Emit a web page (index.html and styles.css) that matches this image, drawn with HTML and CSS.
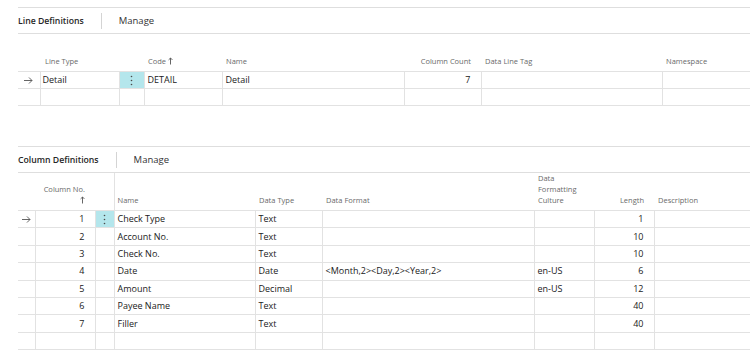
FILE: index.html
```html
<!DOCTYPE html>
<html lang="en">
<head>
    <meta charset="UTF-8">
    <title>Data Exchange Definition</title>
    <link rel="stylesheet" href="styles.css">
</head>
<body>
    <section class="part">
        <div class="toolbar">
            <span class="part-title">Line Definitions</span>
            <span class="sep"></span>
            <span class="action">Manage</span>
        </div>

        <table class="grid lines">
            <colgroup>
                <col style="width: 22px">
                <col style="width: 79px">
                <col style="width: 25px">
                <col style="width: 78px">
                <col style="width: 182px">
                <col style="width: 77px">
                <col style="width: 181px">
                <col style="width: 120px">
            </colgroup>
            <thead>
                <tr>
                    <th></th>
                    <th>Line Type</th>
                    <th></th>
                    <th>Code <svg class="sort" width="5" height="8" viewBox="0 0 5 8"><path d="M2.5 7.5V1M0.6 2.9L2.5 1L4.4 2.9"/></svg></th>
                    <th>Name</th>
                    <th class="num">Column Count</th>
                    <th>Data Line Tag</th>
                    <th>Namespace</th>
                </tr>
            </thead>
            <tbody>
                <tr>
                    <td class="mark"><svg class="arrow" width="9" height="7" viewBox="0 0 9 7"><path d="M0 3.5H8M5 0.5L8 3.5L5 6.5"/></svg></td>
                    <td>Detail</td>
                    <td class="dots"><svg width="3" height="11" viewBox="0 0 3 11"><circle cx="1.5" cy="1.5" r="0.8"/><circle cx="1.5" cy="5.5" r="0.8"/><circle cx="1.5" cy="9.5" r="0.8"/></svg></td>
                    <td>DETAIL</td>
                    <td>Detail</td>
                    <td class="num">7</td>
                    <td></td>
                    <td></td>
                </tr>
                <tr>
                    <td class="mark"></td>
                    <td></td>
                    <td></td>
                    <td></td>
                    <td></td>
                    <td class="num"></td>
                    <td></td>
                    <td></td>
                </tr>
            </tbody>
        </table>
    </section>

    <section class="part">
        <div class="toolbar">
            <span class="part-title">Column Definitions</span>
            <span class="sep"></span>
            <span class="action">Manage</span>
        </div>

        <table class="grid columns">
            <colgroup>
                <col style="width: 17px">
                <col style="width: 60px">
                <col style="width: 19px">
                <col style="width: 141px">
                <col style="width: 67px">
                <col style="width: 212px">
                <col style="width: 60px">
                <col style="width: 60px">
                <col style="width: 120px">
            </colgroup>
            <thead>
                <tr>
                    <th></th>
                    <th class="num">Column No.<br><svg class="sort" width="5" height="8" viewBox="0 0 5 8"><path d="M2.5 7.5V1M0.6 2.9L2.5 1L4.4 2.9"/></svg></th>
                    <th></th>
                    <th class="frozen">Name</th>
                    <th>Data Type</th>
                    <th>Data Format</th>
                    <th>Data<br>Formatting<br>Culture</th>
                    <th class="num">Length</th>
                    <th>Description</th>
                </tr>
            </thead>
            <tbody>
                <tr>
                    <td class="mark"><svg class="arrow" width="9" height="7" viewBox="0 0 9 7"><path d="M0 3.5H8M5 0.5L8 3.5L5 6.5"/></svg></td>
                    <td class="num">1</td>
                    <td class="dots"><svg width="3" height="11" viewBox="0 0 3 11"><circle cx="1.5" cy="1.5" r="0.8"/><circle cx="1.5" cy="5.5" r="0.8"/><circle cx="1.5" cy="9.5" r="0.8"/></svg></td>
                    <td>Check Type</td>
                    <td>Text</td>
                    <td></td>
                    <td></td>
                    <td class="num">1</td>
                    <td></td>
                </tr>
                <tr>
                    <td class="mark"></td>
                    <td class="num">2</td>
                    <td></td>
                    <td>Account No.</td>
                    <td>Text</td>
                    <td></td>
                    <td></td>
                    <td class="num">10</td>
                    <td></td>
                </tr>
                <tr>
                    <td class="mark"></td>
                    <td class="num">3</td>
                    <td></td>
                    <td>Check No.</td>
                    <td>Text</td>
                    <td></td>
                    <td></td>
                    <td class="num">10</td>
                    <td></td>
                </tr>
                <tr>
                    <td class="mark"></td>
                    <td class="num">4</td>
                    <td></td>
                    <td>Date</td>
                    <td>Date</td>
                    <td>&lt;Month,2&gt;&lt;Day,2&gt;&lt;Year,2&gt;</td>
                    <td>en-US</td>
                    <td class="num">6</td>
                    <td></td>
                </tr>
                <tr>
                    <td class="mark"></td>
                    <td class="num">5</td>
                    <td></td>
                    <td>Amount</td>
                    <td>Decimal</td>
                    <td></td>
                    <td>en-US</td>
                    <td class="num">12</td>
                    <td></td>
                </tr>
                <tr>
                    <td class="mark"></td>
                    <td class="num">6</td>
                    <td></td>
                    <td>Payee Name</td>
                    <td>Text</td>
                    <td></td>
                    <td></td>
                    <td class="num">40</td>
                    <td></td>
                </tr>
                <tr>
                    <td class="mark"></td>
                    <td class="num">7</td>
                    <td></td>
                    <td>Filler</td>
                    <td>Text</td>
                    <td></td>
                    <td></td>
                    <td class="num">40</td>
                    <td></td>
                </tr>
                <tr>
                    <td class="mark"></td>
                    <td class="num"></td>
                    <td></td>
                    <td></td>
                    <td></td>
                    <td></td>
                    <td></td>
                    <td class="num"></td>
                    <td></td>
                </tr>
            </tbody>
        </table>
    </section>
</body>
</html>
```

FILE: styles.css
```css
body {
    font-family: 'Segoe UI', 'Open Sans', sans-serif;
    font-size: 9px;
    color: #212121;
    background: white;
    margin: 0;
    padding: 7px 0 0 18px;
    overflow: hidden;
}

.part {
    margin-bottom: 40px;
}

.part:last-child {
    margin-bottom: 0;
}

.toolbar {
    display: flex;
    align-items: center;
    height: 25px;
    border-top: 1px solid #dedede;
    border-bottom: 1px solid #dedede;
    white-space: nowrap;
}

.part-title {
    font-size: 8.7px;
    font-weight: 600;
    color: #262626;
}

.sep {
    width: 1px;
    height: 16px;
    background-color: #d4d4d4;
    margin: 0 17px 0 17px;
}

.action {
    font-size: 9.5px;
    color: #333;
}

.grid {
    border-collapse: collapse;
    table-layout: fixed;
    width: 764px;
}

.grid.columns {
    width: 756px;
}

.grid th {
    font-weight: 400;
    font-size: 7.5px;
    color: #6a6a6a;
    text-align: left;
    vertical-align: bottom;
    line-height: 11px;
    height: 33px;
    padding: 0 4px 4px 4px;
    border-bottom: 1px solid #e2e2e2;
    white-space: nowrap;
}

.grid th.frozen {
    border-left: 1px solid #e2e2e2;
    padding-left: 3px;
}

.grid td {
    height: 16px;
    padding: 0 3px;
    border-bottom: 1px solid #e2e2e2;
    border-right: 1px solid #e2e2e2;
    white-space: nowrap;
    line-height: 12px;
}

.grid.columns td {
    height: 16.4px;
}

.grid .num {
    text-align: right;
    padding-right: 10px;
}

.grid td.mark {
    padding: 0;
    text-align: center;
}

.grid td.dots {
    background-color: #b4e6ec;
    text-align: center;
    padding: 0;
}

.dots svg {
    display: block;
    margin: 0 auto;
    fill: #4a4a4a;
}

.arrow {
    display: block;
    margin: 0 auto;
    fill: none;
    stroke: #555;
    stroke-width: 0.9;
}

.sort {
    fill: none;
    stroke: #555;
    stroke-width: 0.9;
    vertical-align: -1px;
}

.lines th:nth-child(2) {
    padding-left: 5px;
}

.lines td:nth-child(2) {
    padding-left: 2px;
}
```
